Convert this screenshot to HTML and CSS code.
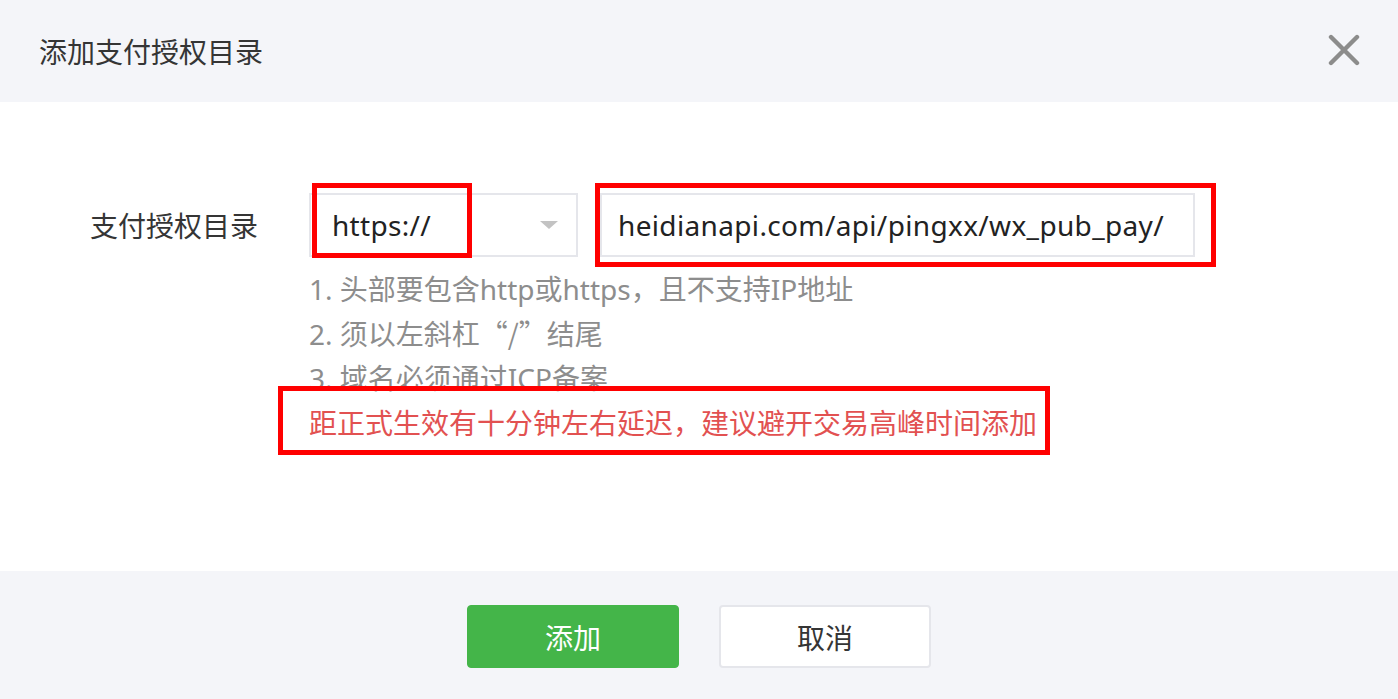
FILE: index.html
```html
<!DOCTYPE html>
<html lang="zh-CN">
<head>
<meta charset="utf-8">
<title>添加支付授权目录</title>
<link rel="stylesheet" href="styles.css">
</head>
<body>
<div class="dialog">
  <div class="dialog-head">
    <h3 class="dialog-title">添加支付授权目录</h3>
    <span class="close" aria-label="关闭">
      <svg width="32" height="32" viewBox="0 0 32 32"><path d="M3 3 L29 29 M29 3 L3 29" stroke="#8c8c8c" stroke-width="4.4" stroke-linecap="round" fill="none"/></svg>
    </span>
  </div>
  <div class="dialog-body">
    <div class="form-row">
      <label class="form-label">支付授权目录</label>
      <div class="form-field">
        <div class="controls">
          <div class="select">
            <span class="select-value">https://</span>
            <span class="select-arrow"></span>
            <span class="mark mark-scheme"></span>
          </div>
          <div class="input">
            <span class="input-value">heidianapi.com/api/pingxx/wx_pub_pay/</span>
            <span class="mark mark-input"></span>
          </div>
        </div>
        <ul class="tips">
          <li>1. 头部要包含http或https<span class="cjk">，</span>且不支持IP地址</li>
          <li>2. 须以左斜杠<span class="cjk">“/”</span>结尾</li>
          <li>3. 域名必须通过ICP备案</li>
          <li class="warn">距正式生效有十分钟左右延迟<span class="cjk">，</span>建议避开交易高峰时间添加<span class="mark mark-warn"></span></li>
        </ul>
      </div>
    </div>
  </div>
  <div class="dialog-foot">
    <button class="btn btn-primary">添加</button>
    <button class="btn btn-default">取消</button>
  </div>
</div>
</body>
</html>
```

FILE: styles.css
```css
* { box-sizing: border-box; }
html, body { margin: 0; padding: 0; }
body {
  font-family: "Noto Sans", "Noto Sans CJK SC", sans-serif;
  color: #353535;
  background: #fff;
}
.cjk { font-family: "Noto Sans CJK SC", sans-serif; }
.dialog { width: 1398px; height: 699px; display: flex; flex-direction: column; }
.dialog-head {
  height: 102px;
  background: #f4f5f9;
  display: flex;
  align-items: center;
  justify-content: space-between;
  padding: 0 38px 0 39px;
}
.dialog-title {
  margin: 0;
  font-size: 28px;
  font-weight: normal;
  color: #353535;
  line-height: 1;
  font-family: "Noto Sans CJK SC", sans-serif;
}
.close { display: flex; width: 32px; height: 32px; margin-top: -2px; }
.dialog-body {
  flex: 1;
  background: #fff;
  padding-top: 91px;
}
.form-row { display: flex; padding-left: 90px; }
.form-label {
  width: 219px;
  font-size: 28px;
  line-height: 64px;
  color: #353535;
  font-family: "Noto Sans CJK SC", sans-serif;
}
.form-field { display: flex; flex-direction: column; }
.controls { display: flex; gap: 22px; }
.select {
  position: relative;
  width: 269px;
  height: 64px;
  border: 2px solid #e5e6eb;
  background: #fff;
  display: flex;
  align-items: center;
  justify-content: space-between;
  padding: 0 18px 0 21px;
}
.select-value, .input-value { font-size: 28px; color: #222; }
.select-value { letter-spacing: 0.3px; }
.input-value { letter-spacing: 0.35px; }
.select-arrow {
  width: 0; height: 0;
  border-left: 9px solid transparent;
  border-right: 9px solid transparent;
  border-top: 8px solid #c3c3c3;
}
.input {
  position: relative;
  width: 595px;
  height: 64px;
  border: 2px solid #e5e6eb;
  background: #fff;
  display: flex;
  align-items: center;
  padding-left: 16px;
}
.mark { position: absolute; border: 5px solid #ff0000; pointer-events: none; }
.mark-scheme { left: 1px; top: -12px; width: 160px; height: 75px; }
.mark-input { left: -7px; top: -12px; width: 621px; height: 84px; }
.tips {
  list-style: none;
  margin: 9px 0 0;
  padding: 0;
  font-size: 28px;
  line-height: 44px;
  color: #8d8d8d;
}
.tips li { position: relative; white-space: nowrap; }
.tips .warn { color: #e25151; }
.mark-warn { left: -31px; top: -14px; width: 772px; height: 69px; }
.dialog-foot {
  height: 128px;
  background: #f4f5f9;
  display: flex;
  justify-content: center;
  align-items: flex-start;
  gap: 40px;
  padding-top: 34px;
}
.btn {
  width: 212px;
  height: 63px;
  border-radius: 4px;
  font-size: 28px;
  font-family: "Noto Sans CJK SC", sans-serif;
  cursor: pointer;
  padding: 0;
}
.btn-primary { background: #44b549; border: 1px solid #44b549; color: #fff; }
.btn-default { background: #fff; border: 2px solid #e5e6eb; color: #353535; }
```
